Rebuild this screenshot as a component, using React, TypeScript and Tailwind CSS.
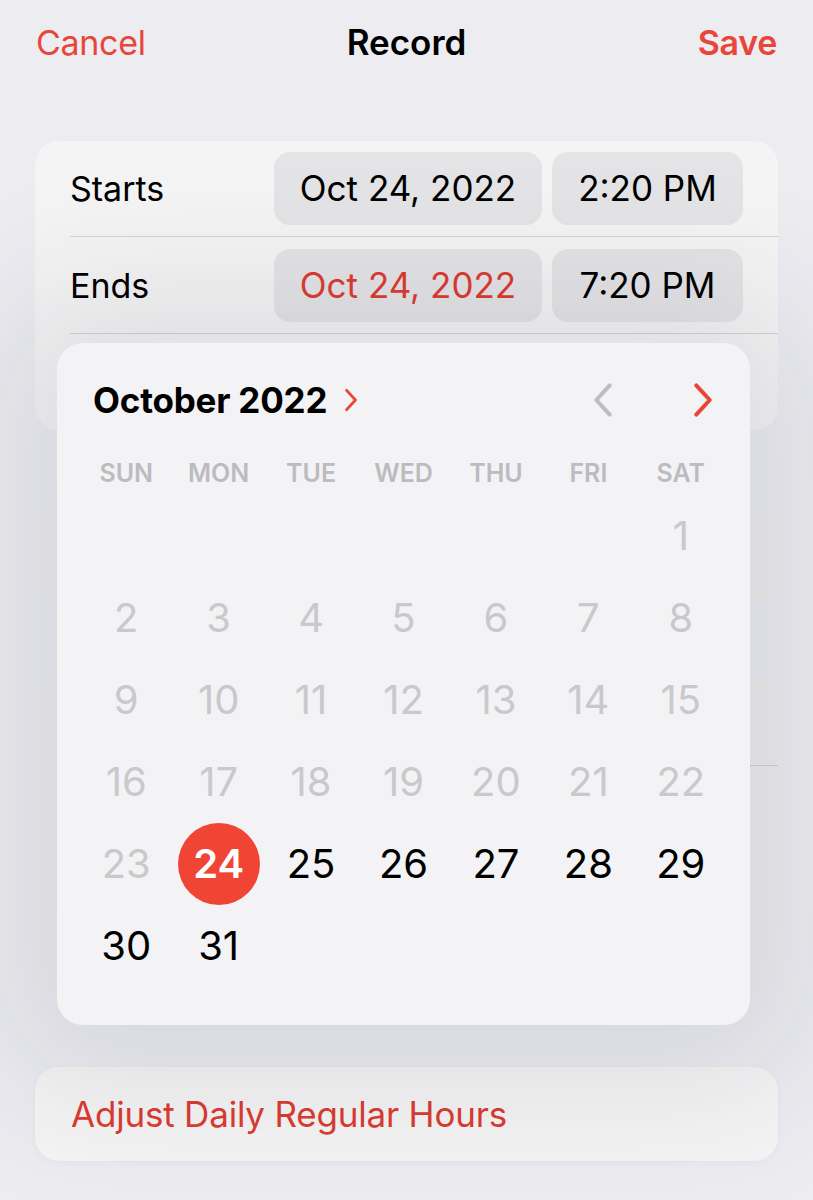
import React from "react";

// 日付ピッカーのセル一覧 (2022年10月、土曜始まり)
const leading = 6;
const days = Array.from({ length: 31 }, (_, i) => i + 1);
const weekdays = ["SUN", "MON", "TUE", "WED", "THU", "FRI", "SAT"];
const selected = 24;

function Chevron({ dir, className }: { dir: "left" | "right"; className: string }) {
  return (
    <svg viewBox="0 0 20 32" className={className} fill="none" stroke="currentColor" strokeWidth={3.6} strokeLinecap="round" strokeLinejoin="round">
      {dir === "right" ? <path d="M4 3 L16 16 L4 29" /> : <path d="M16 3 L4 16 L16 29" />}
    </svg>
  );
}

function Pill({ children, red }: { children: React.ReactNode; red?: boolean }) {
  return (
    <div className={`h-[73px] rounded-[16px] bg-[#e4e4e6] flex items-center justify-center text-[35px] ${red ? "text-[#dc3b30]" : "text-black"}`}>
      {children}
    </div>
  );
}

export default function App() {
  return (
    <div className="relative w-[813px] h-[1200px] overflow-hidden bg-[#ececf1] text-black" style={{ fontFamily: "Inter, 'Noto Sans', sans-serif" }}>
      {/* ナビゲーションバー */}
      <div className="h-[84px] grid grid-cols-[1fr_auto_1fr] items-center px-[36px] text-[34px] tracking-[-0.3px]">
        <span className="text-[#e9463a]">Cancel</span>
        <span className="font-semibold text-[35px] tracking-[0px]">Record</span>
        <span className="font-semibold text-[#e9463a] text-right">Save</span>
      </div>

      <div className="px-[35px] pt-[57px] flex flex-col">
        {/* 開始・終了 */}
        <div className="rounded-[24px] bg-[#f4f4f4] pl-[35px]">
          <div className="h-[96px] flex items-center pr-[35px] border-b border-[#d3d3d6]">
            <span className="flex-1 text-[34px]">Starts</span>
            <div className="w-[268px]"><Pill>Oct 24, 2022</Pill></div>
            <div className="w-[191px] ml-[10px]"><Pill>2:20 PM</Pill></div>
          </div>
          <div className="h-[97px] flex items-center pr-[35px] border-b border-[#d3d3d6]">
            <span className="flex-1 text-[34px]">Ends</span>
            <div className="w-[268px]"><Pill red>Oct 24, 2022</Pill></div>
            <div className="w-[191px] ml-[10px]"><Pill>7:20 PM</Pill></div>
          </div>
          <div className="h-[96px]" />
        </div>

        <div className="mt-[78px] h-[92px] rounded-[24px] bg-[#ededed]" />

        <div className="mt-[80px] rounded-[24px] bg-[#ededed] pl-[35px]">
          <div className="h-[86px] border-b border-[#cfcfd2]" />
          <div className="h-[224px]" />
        </div>

        <div className="mt-[77px] h-[94px] rounded-[24px] bg-[#f5f5f5] shadow-[0_2px_10px_rgba(0,0,0,0.03)] flex items-center px-[36px]">
          <span className="text-[35px] text-[#dc3b30] tracking-[-0.2px]">Adjust Daily Regular Hours</span>
        </div>
      </div>

      {/* カレンダーのポップオーバー */}
      <div className="absolute left-[57px] top-[343px] w-[693px] h-[682px] rounded-[26px] bg-[#f3f3f5] shadow-[0_10px_140px_60px_rgba(40,40,70,0.10)]">
        <div className="h-[114px] flex items-center pl-[36px] pr-[35px]">
          <span className="text-[35px] font-bold tracking-[-0.2px]">October 2022</span>
          <Chevron dir="right" className="ml-[16px] w-[16px] h-[24px] text-[#e9463a]" />
          <div className="flex-1" />
          <Chevron dir="left" className="w-[24px] h-[36px] text-[#bdbdc1]" />
          <Chevron dir="right" className="ml-[76px] w-[24px] h-[36px] text-[#e9463a]" />
        </div>

        <div className="ml-[23px] w-[647px] grid grid-cols-7">
          {weekdays.map((w) => (
            <div key={w} className="h-[34px] flex items-center justify-center text-[25px] font-semibold text-[#bcbcc0]">{w}</div>
          ))}
        </div>

        <div className="ml-[23px] mt-[4px] w-[647px] grid grid-cols-7">
          {Array.from({ length: leading }).map((_, i) => (
            <div key={`e${i}`} className="h-[82px]" />
          ))}
          {days.map((d) => (
            <div key={d} className="h-[82px] flex items-center justify-center">
              {d === selected ? (
                <div className="w-[82px] h-[82px] rounded-full bg-[#f04434] flex items-center justify-center text-white font-semibold text-[40px]">{d}</div>
              ) : (
                <span className={`text-[40px] ${d < selected ? "text-[#c9c9cc]" : "text-black"}`}>{d}</span>
              )}
            </div>
          ))}
        </div>
      </div>
    </div>
  );
}
